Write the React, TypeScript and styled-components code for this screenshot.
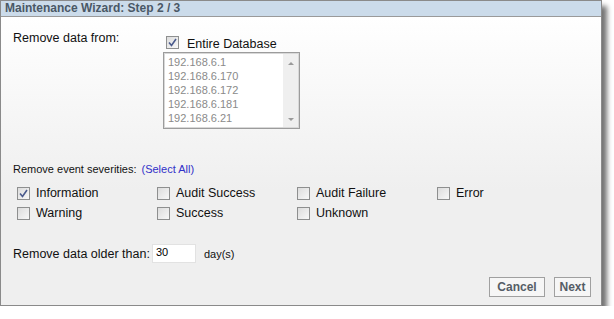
import styled, { createGlobalStyle } from "styled-components";

const GlobalStyle = createGlobalStyle`
  body {
    margin: 0;
    background: #fff;
    font-family: "Liberation Sans", Arial, sans-serif;
  }
`;

const Window = styled.div`
  width: 600px;
  height: 304px;
  border: 1px solid #8a8a8a;
  display: flex;
  flex-direction: column;
  box-shadow: 5px 6px 5px rgba(0, 0, 0, 0.55);
`;

const TitleBar = styled.div`
  height: 15px;
  line-height: 15px;
  background: #cbdbea;
  border-bottom: 1px solid #9a9a9a;
  padding-left: 4px;
  font-size: 12px;
  font-weight: bold;
  color: #4a5866;
`;

const Body = styled.div`
  flex: 1;
  position: relative;
  background: linear-gradient(#ffffff, #efefef 60%);
  padding: 14px 0 0 12px;
  font-size: 12px;
  color: #111;
`;

const SourceRow = styled.div`
  display: flex;
`;

const SourceLabel = styled.div`
  width: 153px;
  font-size: 12.5px;
`;

const SourceCol = styled.div`
  display: flex;
  flex-direction: column;
  padding-top: 4px;
`;

const CheckLabel = styled.label<{ $gap?: number }>`
  display: flex;
  align-items: center;
  gap: ${({ $gap }) => $gap ?? 6}px;
  font-size: 12.5px;
  height: 14px;
`;

const Box = styled.span`
  width: 11px;
  height: 11px;
  border: 1px solid #8e8f8f;
  background: linear-gradient(135deg, #dcdcdc, #f8f8f8);
  display: inline-flex;
  align-items: center;
  justify-content: center;
  flex-shrink: 0;
`;

const ListBox = styled.div`
  margin-top: 3px;
  margin-left: -3px;
  width: 133px;
  height: 73px;
  border: 1px solid #9c9c9c;
  outline: 1px solid #d8d8d8;
  outline-offset: -2px;
  background: #fff;
  display: flex;
  padding: 1px;
`;

const Items = styled.div`
  flex: 1;
  padding: 2px 0 0 3px;
  display: flex;
  flex-direction: column;
`;

const Item = styled.div`
  font-size: 11px;
  line-height: 13.9px;
  color: #8a8a8a;
`;

const ScrollBar = styled.div`
  width: 15px;
  background: #efefef;
  display: flex;
  flex-direction: column;
  justify-content: space-between;
  align-items: center;
  padding: 8px 0 6px;
`;

const Arrow = styled.span<{ $down?: boolean }>`
  width: 0;
  height: 0;
  border-left: 3px solid transparent;
  border-right: 3px solid transparent;
  ${({ $down }) => ($down ? "border-top: 3px solid #9a9a9a;" : "border-bottom: 3px solid #9a9a9a;")}
`;

const SeverityHead = styled.div`
  margin-top: 34px;
  font-size: 11px;
  display: flex;
  gap: 5px;
`;

const SelectAll = styled.span`
  color: #3030c8;
`;

const Grid = styled.div`
  margin-top: 11px;
  margin-left: 4px;
  display: grid;
  grid-template-columns: repeat(4, 140px);
  row-gap: 6px;
`;

const OlderRow = styled.div`
  margin-top: 24px;
  display: flex;
  align-items: center;
  font-size: 12.5px;
`;

const DaysInput = styled.input`
  margin-left: 2px;
  width: 44px;
  height: 19px;
  box-sizing: border-box;
  border: 1px solid #e2e2e2;
  background: #fff;
  font: 11px "Liberation Sans", Arial, sans-serif;
  padding: 0 3px 3px;
  color: #000;
`;

const Unit = styled.span`
  margin-left: 8px;
  font-size: 11px;
`;

const Buttons = styled.div`
  position: absolute;
  right: 10px;
  bottom: 8px;
  display: flex;
  gap: 9px;
`;

const Button = styled.button<{ $w: number }>`
  width: ${({ $w }) => $w}px;
  height: 20px;
  padding: 0;
  border: 1px solid #a0a0a0;
  background: #f6f6f6;
  font: bold 12px "Liberation Sans", Arial, sans-serif;
  color: #555d66;
`;

function Check({ checked }: { checked?: boolean }) {
  return (
    <Box>
      {checked && (
        <svg width="9" height="9" viewBox="0 0 9 9">
          <path d="M1 4.5 L3.5 7.5 L8 1" fill="none" stroke="#4a5a8c" strokeWidth="1.6" />
        </svg>
      )}
    </Box>
  );
}

const ips = ["192.168.6.1", "192.168.6.170", "192.168.6.172", "192.168.6.181", "192.168.6.21"];
const severities = [
  { name: "Information", checked: true },
  { name: "Audit Success" },
  { name: "Audit Failure" },
  { name: "Error" },
  { name: "Warning" },
  { name: "Success" },
  { name: "Unknown" },
];

export default function App() {
  return (
    <>
      <GlobalStyle />
      <Window>
        <TitleBar>Maintenance Wizard: Step 2 / 3</TitleBar>
        <Body>
          <SourceRow>
            <SourceLabel>Remove data from:</SourceLabel>
            <SourceCol>
              <CheckLabel $gap={8}>
                <Check checked />
                <span style={{ paddingTop: 3 }}>Entire Database</span>
              </CheckLabel>
              <ListBox>
                <Items>
                  {ips.map((ip) => (
                    <Item key={ip}>{ip}</Item>
                  ))}
                </Items>
                <ScrollBar>
                  <Arrow />
                  <Arrow $down />
                </ScrollBar>
              </ListBox>
            </SourceCol>
          </SourceRow>

          <SeverityHead>
            Remove event severities:
            <SelectAll>(Select All)</SelectAll>
          </SeverityHead>

          <Grid>
            {severities.map((s) => (
              <CheckLabel key={s.name}>
                <Check checked={s.checked} />
                {s.name}
              </CheckLabel>
            ))}
          </Grid>

          <OlderRow>
            Remove data older than:
            <DaysInput defaultValue="30" />
            <Unit>day(s)</Unit>
          </OlderRow>

          <Buttons>
            <Button $w={56}>Cancel</Button>
            <Button $w={37}>Next</Button>
          </Buttons>
        </Body>
      </Window>
    </>
  );
}
